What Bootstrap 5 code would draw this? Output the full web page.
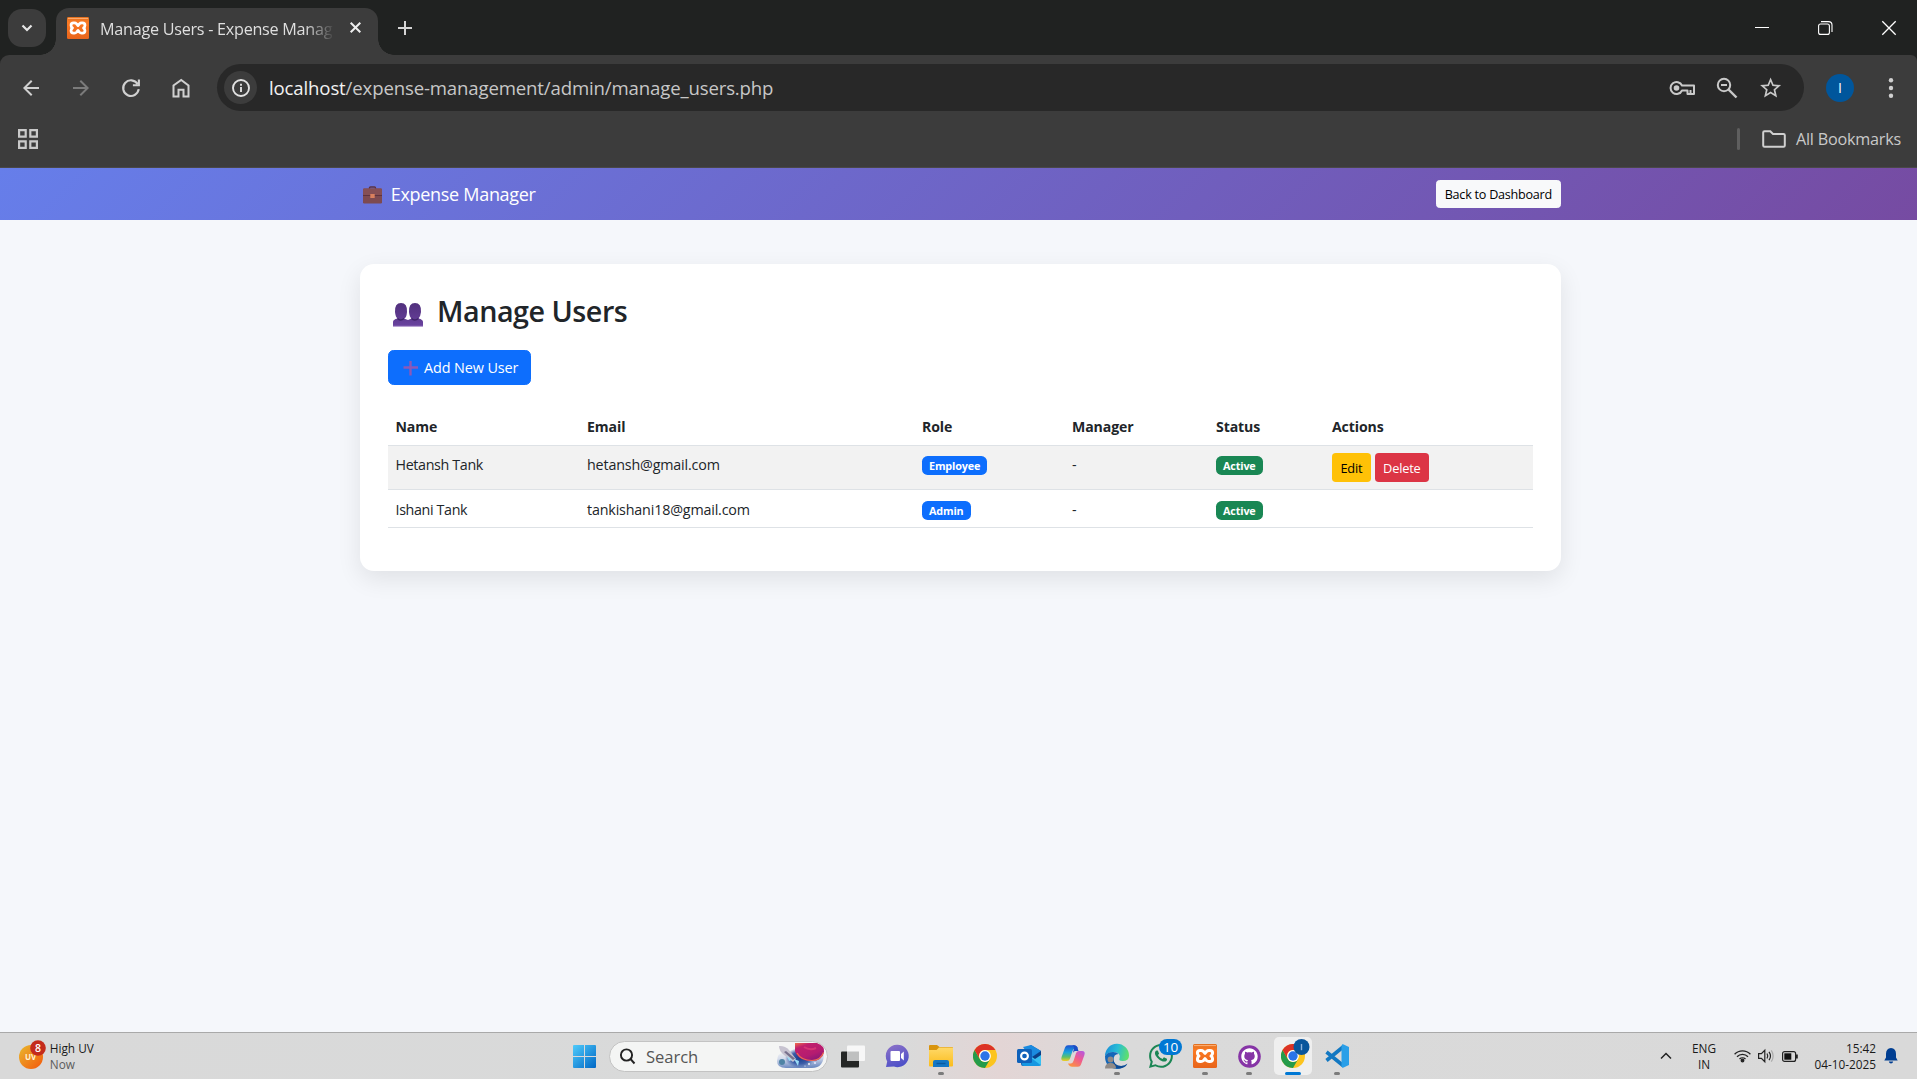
<!DOCTYPE html>
<html lang="en">
<head>
<meta charset="utf-8">
<meta name="viewport" content="width=device-width, initial-scale=1">
<title>Manage Users - Expense Manager</title>
<link href="https://cdn.jsdelivr.net/npm/bootstrap@5.3.0/dist/css/bootstrap.min.css" rel="stylesheet">
<script src="https://cdn.jsdelivr.net/npm/bootstrap@5.3.0/dist/js/bootstrap.bundle.min.js" defer></script>
<style>
html{font-size:15px}
body{height:1079px;overflow:hidden;background:#f5f7fb;font-family:"Open Sans","Noto Sans",sans-serif;line-height:1.5}
svg{display:block;flex:none;overflow:visible}
.w-screen-px{width:1917px}
/* browser tab strip */
.strip{height:55px;background:#202221}
.drop-btn{width:38px;height:38px;margin:9px 0 0 8px;border-radius:14px;background:#3c3c3c}
.b-tab{width:322px;height:47px;margin:8px 0 0 10px;padding:0 17px 8px 11px;border-radius:13px 13px 0 0;background:#3c3c3c}
.b-tab::before,.b-tab::after{content:"";position:absolute;bottom:0;width:16px;height:16px}
.b-tab::before{left:-16px;background:radial-gradient(circle at 0 0,transparent 15.5px,#3c3c3c 16px)}
.b-tab::after{right:-16px;background:radial-gradient(circle at 100% 0,transparent 15.5px,#3c3c3c 16px)}
.tab-title{width:240px;margin-left:11px;padding-top:3px;font-size:16.2px;letter-spacing:-.27px;color:#dfdfdf;white-space:nowrap;-webkit-mask-image:linear-gradient(90deg,#000 205px,transparent 235px);mask-image:linear-gradient(90deg,#000 205px,transparent 235px)}
.new-tab{margin:21px 0 0 20px}
.win-btns{margin-top:21px;padding-right:21px;gap:49px}
/* toolbar */
.tbar-bg{background:#202221}
.tbar{height:113px;background:#3c3c3c;border-radius:9px 6px 0 0;border-bottom:1px solid #4a4848}
.tool-row{height:65px;padding-left:19px}
.nav-icons{gap:26px;width:198px}
.omni{width:1587px;height:47px;border-radius:24px;background:#282828;padding:0 22px 0 7px}
.info-dot{width:33px;height:33px;background:#3c3c3c}
.url-text{margin-left:12px;font-size:18.6px;letter-spacing:-.145px;color:#c7c7c7;white-space:nowrap}
.url-text b{font-weight:400;color:#f2f2f2}
.omni-icons{gap:20px}
.avatar{width:28px;height:28px;margin-left:22px;background:#00569c;color:#fff;font-size:14px}
.dots{margin-left:34px}
.bm-row{height:38px;padding:0 16px 0 18px}
.bm-sep{width:3px;height:22px;border-radius:2px;background:#5f5f5f;margin-right:22px}
.bm-text{margin-left:10px;font-size:16.2px;letter-spacing:-.22px;color:#c9c9c9}
/* application */
.app-nav{height:52px;background:linear-gradient(135deg,#667eea,#764ba2);padding:0}
.app-wrap{width:1201px;margin-left:360px}
.brand-icon{margin:2px 0 0 -1px}
.brand-text{margin-left:9px;font-size:18px;letter-spacing:-.3px;color:#fff}
.btn-back{height:28px;font-size:12.6px;letter-spacing:-.24px;padding:1px 8px 0;line-height:26px;border-radius:3.5px}
.users-card{margin-top:44px;height:307px;padding:28px;border:0;border-radius:14px;box-shadow:0 8px 24px rgba(0,0,0,.09)}
.users-h{height:36px;font-size:28.7px;font-weight:600;letter-spacing:-.47px;line-height:36px;margin-bottom:22px;padding:2px 0 0 4px}
.users-icon{margin:7px 14px 0 1px}
.btn-add{width:143px;height:35px;padding:0 0 0 14px;gap:5px;font-size:14.4px;letter-spacing:-.1px;border-radius:5.6px}
.users-tbl{margin-top:22px;table-layout:fixed;font-size:14.3px;letter-spacing:-.17px}
.users-tbl th{font-size:14.1px;letter-spacing:-.1px}
.users-tbl th,.users-tbl td{padding:7px 7.5px 6px;line-height:23px}
.users-tbl th{padding:6px 7.5px 7px}
.users-tbl .tight{letter-spacing:-.36px}
.users-tbl thead tr{height:38px}
.users-tbl tbody tr:nth-child(1){height:44px}
.users-tbl tbody tr:nth-child(2){height:38px}
.users-tbl tbody tr:nth-child(2) td{padding-top:8px}
.c-name{width:191.5px}.c-email{width:335px}.c-role{width:150px}.c-mgr{width:144px}.c-status{width:116px}
.pill{height:19px;font-size:10.8px;letter-spacing:-.15px;line-height:19px;padding:0 7px;border-radius:5.6px;margin-top:3px;display:inline-block;vertical-align:top}
.btn-act{height:29px;font-size:12.8px;letter-spacing:-.2px;padding:1px 8.400px 0;line-height:28px;border-radius:3.75px}
.act-cell{height:29px;gap:4px}
/* taskbar */
.task{height:47px;background:linear-gradient(90deg,#d9d9d9 0,#d9dada 900px,#e3d5d5 1000px,#dadada 1120px,#d9d9d9);border-top:1px solid #a9a9a9;font-size:11.8px;line-height:16px;color:#1a1a1a}
.weather{width:562px;padding-left:18px}
.w-now{color:#5c5c5c}
.slot{width:44px;height:46px}
.slot .run{position:absolute;bottom:4px;left:19px;width:6px;height:3px;border-radius:2px;background:#7b7b7b}
.slot .run.on{left:14px;width:16px;background:#0078d4}
.slot.cur::before{content:"";position:absolute;inset:4px 3px;border-radius:5px;background:#efefef}
.find{width:219px;height:31px;margin:0 3px;border-radius:16px;background:#f4f5f4;border:1px solid #c3c3c3;padding:0 1px 0 9px;font-size:16.6px;letter-spacing:-.05px;color:#555}
.find span{margin:1px 0 0 10px}
.tray{margin-left:auto;width:260px;padding-left:3px}
.tray-lang{width:40px;margin:0 10px 0 12px}
.tray-status{gap:7px}
.tray-clock{width:70px;margin:0 8px}
.count{position:absolute;left:20px;top:6px;width:23px;height:16px;border-radius:8px;background:#0078d4;color:#fff;font-size:13.5px;line-height:16px;letter-spacing:-.2px}
</style>
</head>
<body class="w-screen-px d-flex flex-column">
<svg width="0" height="0" class="position-absolute">
  <defs>
    <linearGradient id="gx" x2="0" y2="1"><stop stop-color="#e0701f"/><stop offset=".25" stop-color="#fb7a24"/><stop offset="1" stop-color="#e8641b"/></linearGradient>
    <linearGradient id="gw" x2="1" y2="1"><stop stop-color="#4fcbfb"/><stop offset="1" stop-color="#0067c5"/></linearGradient>
    <linearGradient id="gu" x2="1" y2="1"><stop stop-color="#e9b92e"/><stop offset="1" stop-color="#f4570b"/></linearGradient>
    <linearGradient id="gt" x1=".1" x2=".5" y2="1"><stop stop-color="#8d72c8"/><stop offset="1" stop-color="#4d50c8"/></linearGradient>
    <linearGradient id="gf" x2="0" y2="1"><stop stop-color="#ffd969"/><stop offset="1" stop-color="#fbbc1c"/></linearGradient>
    <linearGradient id="gp" x2="0" y2="1"><stop stop-color="#51307d"/><stop offset=".6" stop-color="#5f3a90"/><stop offset="1" stop-color="#6a44a0"/></linearGradient>
    <linearGradient id="ge" x2="1" y1=".3" y2=".5"><stop stop-color="#1b8fd8"/><stop offset=".5" stop-color="#28bdd5"/><stop offset="1" stop-color="#5fe06a"/></linearGradient>
    <linearGradient id="gc1" x1="0" y1="0" x2="0" y2="1"><stop stop-color="#1d4fd0"/><stop offset=".45" stop-color="#18a4e0"/><stop offset=".75" stop-color="#5cc06a"/><stop offset="1" stop-color="#f4cc20"/></linearGradient>
    <linearGradient id="gc2" x1="1" y1="0" x2=".3" y2="1"><stop stop-color="#b057e8"/><stop offset=".5" stop-color="#ef5a90"/><stop offset="1" stop-color="#fb9046"/></linearGradient>
    <linearGradient id="gs" x1="0" y1="0" x2=".1" y2="1"><stop stop-color="#f4f5f4"/><stop offset=".45" stop-color="#d5dcec"/><stop offset="1" stop-color="#6f8cc2"/></linearGradient>
    <radialGradient id="gn"><stop stop-color="#173c8c"/><stop offset=".6" stop-color="#3c5ea8"/><stop offset="1" stop-color="#3c5ea8" stop-opacity="0"/></radialGradient>
    <linearGradient id="gr" x2=".6" y2="1"><stop stop-color="#f0704a"/><stop offset=".25" stop-color="#c0206c"/><stop offset=".7" stop-color="#b51c70"/><stop offset="1" stop-color="#8a1878"/></linearGradient>
    <symbol id="xampp" viewBox="0 0 24 24">
      <rect width="24" height="24" rx="1.5" fill="url(#gx)"/><path d="M1 1.6h22" stroke="#ffb077" stroke-width="1"/>
      <path d="M12 9.400 10.500 7.500Q9.500 6.500 8 6.500H7.200Q4.400 6.500 4.400 9 4.400 11 6 12 4.400 13 4.400 15 4.400 17.500 7.200 17.500H8Q9.500 17.500 10.500 16.500L12 14.600 13.500 16.500Q14.500 17.500 16 17.500H16.800Q19.600 17.500 19.600 15 19.600 13 18 12 19.600 11 19.600 9 19.600 6.500 16.800 6.500H16Q14.500 6.500 13.500 7.500Z" fill="none" stroke="#fff" stroke-width="3" stroke-linejoin="round"/>
    </symbol>
    <symbol id="chrome" viewBox="0 0 24 24">
      <circle cx="12" cy="12" r="12" fill="#fcc41f"/>
      <path d="M1.600 6A12 12 0 0 0 12 24L17.200 15A6 6 0 0 1 6.800 15Z" fill="#259b4a"/>
      <path d="M1.600 6A12 12 0 0 1 22.400 6H12A6 6 0 0 0 6.800 15Z" fill="#dc3226"/>
      <circle cx="12" cy="12" r="5.900" fill="#fff"/><circle cx="12" cy="12" r="4.700" fill="#2b74e8"/>
    </symbol>
  </defs>
</svg>

<header>
  <div class="strip d-flex align-items-start">
    <div class="drop-btn d-flex align-items-center justify-content-center"><svg width="12" height="8" viewBox="0 0 12 8"><path d="M1.500 1.500 6 6l4.500-4.500" fill="none" stroke="#e6e6e6" stroke-width="2.200"/></svg></div>
    <div class="b-tab position-relative d-flex align-items-center">
      <svg width="22" height="22"><use href="#xampp"/></svg>
      <div class="tab-title">Manage Users - Expense Manag</div>
      <svg class="ms-auto" width="11" height="11" viewBox="0 0 11 11"><path d="m.7.7 9.600 9.600m0-9.600L.7 10.300" stroke="#eee" stroke-width="2"/></svg>
    </div>
    <svg class="new-tab" width="14" height="14" viewBox="0 0 14 14"><path d="M7 0v14M0 7h14" stroke="#d5d5d5" stroke-width="2"/></svg>
    <div class="win-btns d-flex ms-auto">
      <svg width="14" height="14" viewBox="0 0 14 14"><path d="M0 6.500h14" stroke="#fff"/></svg>
      <svg width="15" height="14" viewBox="0 0 15 14"><rect x=".6" y="3" width="10.800" height="10.400" rx="2" fill="none" stroke="#fff" stroke-width="1.100"/><path d="M3 .6h7.500a3.500 3.500 0 0 1 3.500 3.500V11" fill="none" stroke="#fff" stroke-width="1.100"/></svg>
      <svg width="14" height="14" viewBox="0 0 14 14"><path d="m.3.3 13.400 13.400m0-13.400L.3 13.700" stroke="#fff" stroke-width="1.300"/></svg>
    </div>
  </div>
  <div class="tbar-bg"><div class="tbar">
    <div class="tool-row d-flex align-items-center">
      <div class="nav-icons d-flex align-items-center">
        <svg width="24" height="24" fill="#d0d0d0"><path d="M20 11H7.830l5.590-5.590L12 4l-8 8 8 8 1.410-1.410L7.830 13H20z"/></svg>
        <svg width="24" height="24" fill="#7b7b7b"><path d="M4 11h12.170l-5.590-5.590L12 4l8 8-8 8-1.410-1.410L16.170 13H4z"/></svg>
        <svg width="24" height="24" fill="none" stroke="#d0d0d0" stroke-width="2.100"><path d="M18.600 8A7.800 7.800 0 1 0 19.700 13.200M19.900 3.500V9.200h-6"/></svg>
        <svg width="24" height="24" fill="none" stroke="#d0d0d0" stroke-width="2"><path d="M4.500 20.500v-11L12.200 4l7.300 5.500v11h-5v-6.800h-5v6.800z"/></svg>
      </div>
      <div class="omni d-flex align-items-center">
        <div class="info-dot rounded-circle d-flex align-items-center justify-content-center"><svg width="18" height="18" viewBox="0 0 18 18"><circle cx="9" cy="9" r="8" fill="none" stroke="#e2e2e2" stroke-width="1.900"/><path d="M9 8v5M9 4.800v2" stroke="#e2e2e2" stroke-width="1.900"/></svg></div>
        <div class="url-text"><b>localhost</b>/expense-management/admin/manage_users.php</div>
        <div class="omni-icons d-flex align-items-center ms-auto">
          <svg width="27" height="16" viewBox="0 0 27 16" fill="none" stroke="#c9c9c9" stroke-width="2"><path d="M13 5.500A6 6 0 1 0 13 10.500h5.500v3.500h6.500V5.500z" stroke-linejoin="round"/><path d="M21.500 13.500v-3.500" /><circle cx="7.500" cy="8" r="2.800" fill="#c9c9c9" stroke="none"/></svg>
          <svg width="22" height="22" viewBox="0 0 22 22" fill="none" stroke="#c9c9c9" stroke-width="2"><circle cx="8" cy="8" r="6.200"/><path d="m12.500 12.500 8 8" stroke-width="2.400"/><path d="M5 8h6"/></svg>
          <svg width="24" height="24" viewBox="0 0 24 24" fill="#c9c9c9"><path transform="translate(0 -.6) scale(1.050)" d="m22 9.240-7.190-.62L12 2 9.190 8.630 2 9.240l5.460 4.730L5.820 21 12 17.270 18.180 21l-1.630-7.030L22 9.240zM12 15.400l-3.760 2.270 1-4.280-3.320-2.880 4.380-.38L12 6.100l1.710 4.040 4.380.38-3.320 2.880 1 4.280L12 15.400z"/></svg>
        </div>
      </div>
      <div class="avatar rounded-circle d-flex align-items-center justify-content-center">I</div>
      <svg class="dots" width="6" height="22" viewBox="0 0 6 22" fill="#d0d0d0"><circle cx="3" cy="3.200" r="2.200"/><circle cx="3" cy="11" r="2.200"/><circle cx="3" cy="18.800" r="2.200"/></svg>
    </div>
    <div class="bm-row d-flex align-items-center justify-content-between">
      <svg width="20" height="20" viewBox="0 0 20 20" fill="none" stroke="#c9c9c9" stroke-width="2.200"><path d="M1.100 1.100h6.600v6.600H1.100zM12.300 1.100h6.600v6.600h-6.600zM1.100 12.300h6.600v6.600H1.100zM12.300 12.300h6.600v6.600h-6.600z"/></svg>
      <div class="d-flex align-items-center">
        <div class="bm-sep"></div>
        <svg width="24" height="18" viewBox="0 0 24 18"><path d="M1.200 15V2.500Q1.200 1.200 2.500 1.200h5.800l2.700 2.700h10.500q1.300 0 1.300 1.300V15.500q0 1.300-1.300 1.300H2.500q-1.300 0-1.300-1.300z" fill="none" stroke="#d0d0d0" stroke-width="2"/></svg>
        <span class="bm-text">All Bookmarks</span>
      </div>
    </div>
  </div></div>
</header>

<nav class="app-nav navbar">
  <div class="app-wrap d-flex align-items-center justify-content-between">
    <div class="d-flex align-items-center ps-1">
      <svg class="brand-icon" width="19" height="18" viewBox="0 0 19 18"><path d="M6.500 3.500V2q0-1 1-1h4q1 0 1 1v1.500" fill="none" stroke="#5b3240" stroke-width="1.400"/><rect y="2.500" width="19" height="15" rx="1.200" fill="#7d4a50"/><path d="M0 8q0 2 2 2h15q2 0 2-2V3.700q0-1.200-1.200-1.200H1.200Q0 2.500 0 3.700z" fill="#854f54"/><path d="M0 9.500h19" stroke="#5f333e"/><rect x="7.300" y="8" width="4.400" height="4" fill="#d9805e"/></svg>
      <span class="brand-text">Expense Manager</span>
    </div>
    <a class="btn btn-light btn-sm btn-back">Back to Dashboard</a>
  </div>
</nav>

<main class="flex-grow-1">
  <div class="card users-card app-wrap">
    <h2 class="users-h d-flex align-items-center">
      <svg class="users-icon" width="30" height="24" viewBox="0 0 30 24"><g fill="url(#gp)"><path d="M2 9Q1.500 0 8 0t6 9q-.5 6-3 6.500L15 17v6.500H0V19q0-2.500 4.500-3.500Q2.500 14 2 9z"/><path d="M16 9Q15.500 0 22 0t6 9q-.5 4.500-2.500 6.500Q30 16.500 30 19v4.500H15V17l3.500-1.500Q16.500 14 16 9z"/></g><path d="M4.500 15.500Q7.500 18.500 11 15.500M18.500 15.500q3 3 7 0" stroke="#3e2368" stroke-width="1.400" fill="none"/><path d="M0 23.300h30" stroke="#b9a0d4" stroke-width=".8"/></svg>
      Manage Users
    </h2>
    <a class="btn btn-primary btn-add d-flex align-items-center"><svg width="16" height="16" viewBox="0 0 16 16"><path d="M7.500 1v14.500M.5 7.500h14.500" stroke="#8b59b8" stroke-width="2.400"/></svg>Add New User</a>
    <table class="table table-striped users-tbl mb-0">
      <colgroup><col class="c-name"><col class="c-email"><col class="c-role"><col class="c-mgr"><col class="c-status"><col></colgroup>
      <thead><tr><th>Name</th><th>Email</th><th>Role</th><th>Manager</th><th>Status</th><th>Actions</th></tr></thead>
      <tbody>
        <tr><td class="tight">Hetansh Tank</td><td>hetansh@gmail.com</td><td><span class="badge bg-primary pill">Employee</span></td><td>-</td><td><span class="badge bg-success pill">Active</span></td><td><div class="act-cell d-flex"><a class="btn btn-warning border-0 btn-act">Edit</a><a class="btn btn-danger border-0 btn-act">Delete</a></div></td></tr>
        <tr><td class="tight">Ishani Tank</td><td>tankishani18@gmail.com</td><td><span class="badge bg-primary pill">Admin</span></td><td>-</td><td><span class="badge bg-success pill">Active</span></td><td></td></tr>
      </tbody>
    </table>
  </div>
</main>

<footer class="task d-flex align-items-center">
  <div class="weather d-flex align-items-center">
    <svg width="28" height="30" viewBox="0 0 28 30"><circle cx="13" cy="16" r="12" fill="url(#gu)"/><text x="7" y="18.500" font-size="8" font-weight="700" fill="#fff3d0">UV</text><circle cx="20" cy="7" r="7.800" fill="#c42b1c"/><text x="20" y="11" font-size="10.500" font-weight="600" fill="#fff" text-anchor="middle">8</text></svg>
    <div class="ms-1"><div>High UV</div><div class="w-now">Now</div></div>
  </div>
  <div class="slot d-flex align-items-center justify-content-center"><svg width="23" height="23" viewBox="0 0 23 23" fill="url(#gw)"><path d="M1 0h10v11H0V1q0-1 1-1zM12 0h10q1 0 1 1v10H12zM0 12h11v11H1q-1 0-1-1zM12 12h11v10q0 1-1 1H12z"/></svg></div>
  <div class="find d-flex align-items-center">
    <svg width="17" height="17" viewBox="0 0 17 17" fill="none" stroke="#222" stroke-width="1.900"><circle cx="7.500" cy="7" r="5.600"/><path d="m11.500 11 4 4.500"/></svg>
    <span>Search</span>
    <svg class="ms-auto" width="50" height="28" viewBox="0 0 50 28">
      <path d="M1 19Q1 11 10 9L48 11Q48 26 36 26H10Q1 26 1 19z" fill="url(#gs)"/><ellipse cx="24" cy="16" rx="15" ry="10" fill="url(#gn)"/>
      <path d="M19 1h22q8 3 7 9-2 9-12 9-14 0-17-10z" fill="url(#gr)"/><path d="M21 11q4 7.500 15 7.500 9-.5 11.500-8" fill="none" stroke="#ef6b50" stroke-width="1.200"/><path d="M28 5q6 4 12 1" fill="none" stroke="#e8447a" stroke-width="2" opacity=".6"/>
      <path d="M3 4q6-.5 10 4l7 9-3 3-9-7Q3 9 3 4z" fill="#c7c3d0"/><path d="m8 10 9 8 2-1.500L10 9" fill="#77718c"/><path d="m11 14 2 5 3-1zM18 17l4 7 1-5z" fill="#9adcf5"/>
      <circle cx="6" cy="20" r="3" fill="#4f84a5"/><circle cx="33" cy="22" r=".9" fill="#fff"/><circle cx="39" cy="21" r="1" fill="#e5e9ff"/><circle cx="29" cy="24" r=".6" fill="#fff"/>
    </svg>
  </div>
  <div class="slot d-flex align-items-center justify-content-center"><svg width="24" height="23" viewBox="0 0 24 23"><rect y="6.500" width="18" height="16" rx="1" fill="#242625"/><rect x="6" y=".5" width="18" height="15.500" rx="1" fill="#f7f7f7"/><path d="M6 6.500h12V16H6z" fill="#bfc0c0"/></svg></div>
  <div class="slot d-flex align-items-center justify-content-center"><svg width="24" height="24" viewBox="0 0 24 24"><path d="M12 .8A11.200 11.200 0 1 1 9 22.600L1 23 2.200 17.500A11.200 11.200 0 0 1 12 .8z" fill="url(#gt)"/><rect x="5.500" y="7" width="9.500" height="10" rx="1" fill="#fff"/><path d="m16 10 2.800-2.500v9L16 14z" fill="#fff"/></svg></div>
  <div class="slot position-relative d-flex align-items-center justify-content-center"><svg width="24" height="24" viewBox="0 0 24 24"><path d="M0 2q0-1 1-1h7l2.500 2H23q1 0 1 1v2H0z" fill="#d9940e"/><path d="M0 6h7.500L10 3.500h13.500q.5 0 .5.500v17.500q0 1-1 1H1q-1 0-1-1z" fill="url(#gf)"/><path d="M4 23v-5q0-2 2-2h12q2 0 2 2v5z" fill="#1577c4"/><path d="M7.500 19.500h9" stroke="#0b5aa0" stroke-width="1.400"/></svg><i class="run"></i></div>
  <div class="slot d-flex align-items-center justify-content-center"><svg width="24" height="24"><use href="#chrome"/></svg></div>
  <div class="slot d-flex align-items-center justify-content-center"><svg width="24" height="24" viewBox="0 0 24 24"><path d="M4 7 14 1l10 6v13q0 2-2 2H6q-2 0-2-2z" fill="#1562b5"/><path d="M6 3 14 1l10 6-10 7z" fill="#1b8be0"/><path d="M14 14 24 7.500V20q0 2-2 2H9z" fill="#38c0f2"/><path d="m13 13 10.500 8q-.8 1-2 1H7q-2 0-2-2v-2z" fill="#1597e2"/><path d="M15 13 24 7v4l-6 4z" fill="#0c3f86"/><rect y="5" width="15" height="14" rx="1.500" fill="#0f61ba"/><circle cx="7.500" cy="12" r="3.400" fill="none" stroke="#fff" stroke-width="2.100"/></svg></div>
  <div class="slot d-flex align-items-center justify-content-center"><svg width="24" height="24" viewBox="0 0 24 24"><path d="M17 4.500 16.200 3Q15.200 1.200 13 1.200H7Q4.800 1.200 4 3.500L.6 13Q-.6 17 3 17H6q2.200 0 3-2.200l2.400-7.500Q12.200 4.800 14 4.500z" fill="url(#gc1)"/><path d="M7 19.500l.8 1.500q1 1.800 3.200 1.800h6q2.200 0 3-2.300L23.400 11Q24.600 7 21 7h-3q-2.200 0-3 2.200l-2.400 7.500q-.8 2.500-2.600 2.800z" fill="url(#gc2)"/><path d="M13 1.200q2.200 0 3.200 1.800l1.300 4H14q-1.500.3-2.300 2.500L13 4.500Q13.500 2 11 1.200z" fill="#1c4dc5"/></svg></div>
  <div class="slot position-relative d-flex align-items-center justify-content-center"><svg width="26" height="25" viewBox="0 0 26 25"><path d="M1 12A12 12 0 0 1 25 11.500Q25 17 18.500 17q-4 0-3-2.500Q17 8 9.500 8 4 8 1 12z" fill="url(#ge)"/><path d="M1 12q2.500-4 8-4 4 0 5.500 2-5 0-5 6 1 6 8 6 3 0 5.500-2-4 5-10.500 5Q1 24 1 12z" fill="#1467b8"/><path d="M9.500 14q0 8 7.500 8 4 0 6.500-2.500-2 5-10 5Q8 23 9.500 14z" fill="#0f4a94"/><circle cx="6.500" cy="15.500" r="2.900" fill="#8f8a87"/><path d="M1 24.500q0-5.500 5.500-5.500t5.500 5.500z" fill="#8f8a87"/></svg><i class="run"></i></div>
  <div class="slot position-relative d-flex align-items-center justify-content-center"><svg width="24" height="24" viewBox="0 0 16 16" fill="#1b8654"><path d="M13.601 2.326A7.850 7.850 0 0 0 7.994 0C3.627 0 .068 3.558.064 7.926c0 1.399.366 2.760 1.057 3.965L0 16l4.204-1.102a7.900 7.900 0 0 0 3.790.965h.004c4.368 0 7.926-3.558 7.930-7.930A7.900 7.900 0 0 0 13.600 2.326zM7.994 14.521a6.600 6.600 0 0 1-3.356-.92l-.24-.144-2.494.654.666-2.433-.156-.251a6.560 6.560 0 0 1-1.007-3.505c0-3.626 2.957-6.584 6.591-6.584a6.560 6.560 0 0 1 4.660 1.931 6.560 6.560 0 0 1 1.928 4.660c-.004 3.639-2.961 6.592-6.592 6.592m3.615-4.934c-.197-.099-1.170-.578-1.353-.646-.182-.065-.315-.099-.445.099-.133.197-.513.646-.627.775-.114.133-.232.148-.43.050-.197-.1-.836-.308-1.592-.985-.59-.525-.985-1.175-1.103-1.372-.114-.198-.011-.304.088-.403.087-.088.197-.232.296-.346.1-.114.133-.198.198-.33.065-.134.034-.248-.015-.347-.05-.099-.445-1.076-.612-1.470-.16-.389-.323-.335-.445-.34-.114-.007-.247-.007-.38-.007a.73.73 0 0 0-.529.247c-.182.198-.691.677-.691 1.654s.71 1.916.81 2.049c.098.133 1.394 2.132 3.383 2.992.47.205.84.326 1.129.418.475.152.904.129 1.246.080.38-.058 1.171-.48 1.338-.943.164-.464.164-.86.114-.943-.049-.084-.182-.133-.38-.232"/></svg><span class="count text-center">10</span></div>
  <div class="slot position-relative d-flex align-items-center justify-content-center"><svg width="24" height="24"><use href="#xampp"/></svg><i class="run"></i></div>
  <div class="slot position-relative d-flex align-items-center justify-content-center"><svg width="23" height="23" viewBox="0 0 23 23"><circle cx="11.500" cy="11.500" r="11.300" fill="#8634a6"/><path transform="translate(3.300 3.300) scale(1.025)" fill="#fff" d="M8 0C3.580 0 0 3.580 0 8c0 3.540 2.290 6.530 5.470 7.590.4.070.55-.17.55-.38 0-.19-.01-.82-.01-1.490-2.010.37-2.530-.49-2.690-.94-.09-.23-.48-.94-.82-1.130-.28-.15-.68-.52-.01-.53.63-.01 1.080.58 1.230.82.72 1.210 1.870.87 2.330.66.070-.52.28-.87.51-1.070-1.780-.2-3.640-.89-3.640-3.950 0-.87.31-1.590.82-2.150-.08-.2-.36-1.020.080-2.120 0 0 .67-.21 2.200.82.64-.18 1.320-.27 2-.27s1.360.090 2 .27c1.530-1.040 2.200-.82 2.200-.82.44 1.100.16 1.920.080 2.120.51.56.82 1.270.82 2.150 0 3.070-1.870 3.750-3.650 3.950.29.25.54.73.54 1.480 0 1.070-.01 1.930-.01 2.200 0 .21.15.46.55.38A8.010 8.010 0 0 0 16 8c0-4.420-3.580-8-8-8"/></svg><i class="run"></i></div>
  <div class="slot cur position-relative d-flex align-items-center justify-content-center"><svg class="position-relative" width="30" height="30" viewBox="0 0 30 30"><use href="#chrome" x="3" y="3" width="24" height="24"/><circle cx="23.500" cy="6" r="8" fill="#0a569c"/><path d="M23.500 3v6.200" stroke="#8fb5dc" stroke-width="1.400"/></svg><i class="run on"></i></div>
  <div class="slot position-relative d-flex align-items-center justify-content-center"><svg width="24" height="24" viewBox="0 0 24 24"><path d="M1.500 8 18 21.500M1.500 16.500 18 3" stroke="#1278c2" stroke-width="3.600"/><path d="M17.500 0 24 3v18l-6.500 3-1-2V2z" fill="#2a9fe8"/></svg><i class="run"></i></div>
  <div class="tray d-flex align-items-center">
    <svg width="12" height="8" viewBox="0 0 12 8"><path d="m1 6.500 5-5 5 5" fill="none" stroke="#222" stroke-width="1.500"/></svg>
    <div class="tray-lang text-center"><div>ENG</div><div>IN</div></div>
    <div class="tray-status d-flex align-items-center">
      <svg width="17" height="14" viewBox="0 0 17 14" fill="none" stroke="#222" stroke-width="1.300"><path d="M.6 5.200a11 11 0 0 1 15.800 0M3 7.700a7.700 7.700 0 0 1 11 0M5.500 10a4.300 4.300 0 0 1 6 0"/><circle cx="8.500" cy="11.500" r="1.300" fill="#222"/></svg>
      <svg width="17" height="14" viewBox="0 0 17 14" fill="none" stroke="#222" stroke-width="1.200"><path d="M.6 4.700h2.800L6.800 1.300v11.400L3.400 9.300H.6zM9 4.500q1.500 2.500 0 5M11 2.800q3 4.200 0 8.400"/><path d="M13.300 1.300q3.700 5.700 0 11.400" stroke="#aaa"/></svg>
      <svg width="16" height="11" viewBox="0 0 16 11"><rect x=".6" y=".6" width="13" height="9.800" rx="2" fill="none" stroke="#222" stroke-width="1.200"/><rect x="2.300" y="2.300" width="7" height="6.400" fill="#111"/><path d="M14.900 3.500v4" stroke="#222" stroke-width="1.800"/></svg>
    </div>
    <div class="tray-clock text-end"><div>15:42</div><div>04-10-2025</div></div>
    <svg width="14" height="16" viewBox="0 0 14 16" fill="#003e92"><path d="M7 0Q2 .3 2 6v3.500L.3 12.500h13.400L12 9.500V6Q12 .3 7 0zM4.800 13.500h4.400Q8.800 15.500 7 15.500t-2.200-2z"/></svg>
  </div>
</footer>
</body>
</html>
